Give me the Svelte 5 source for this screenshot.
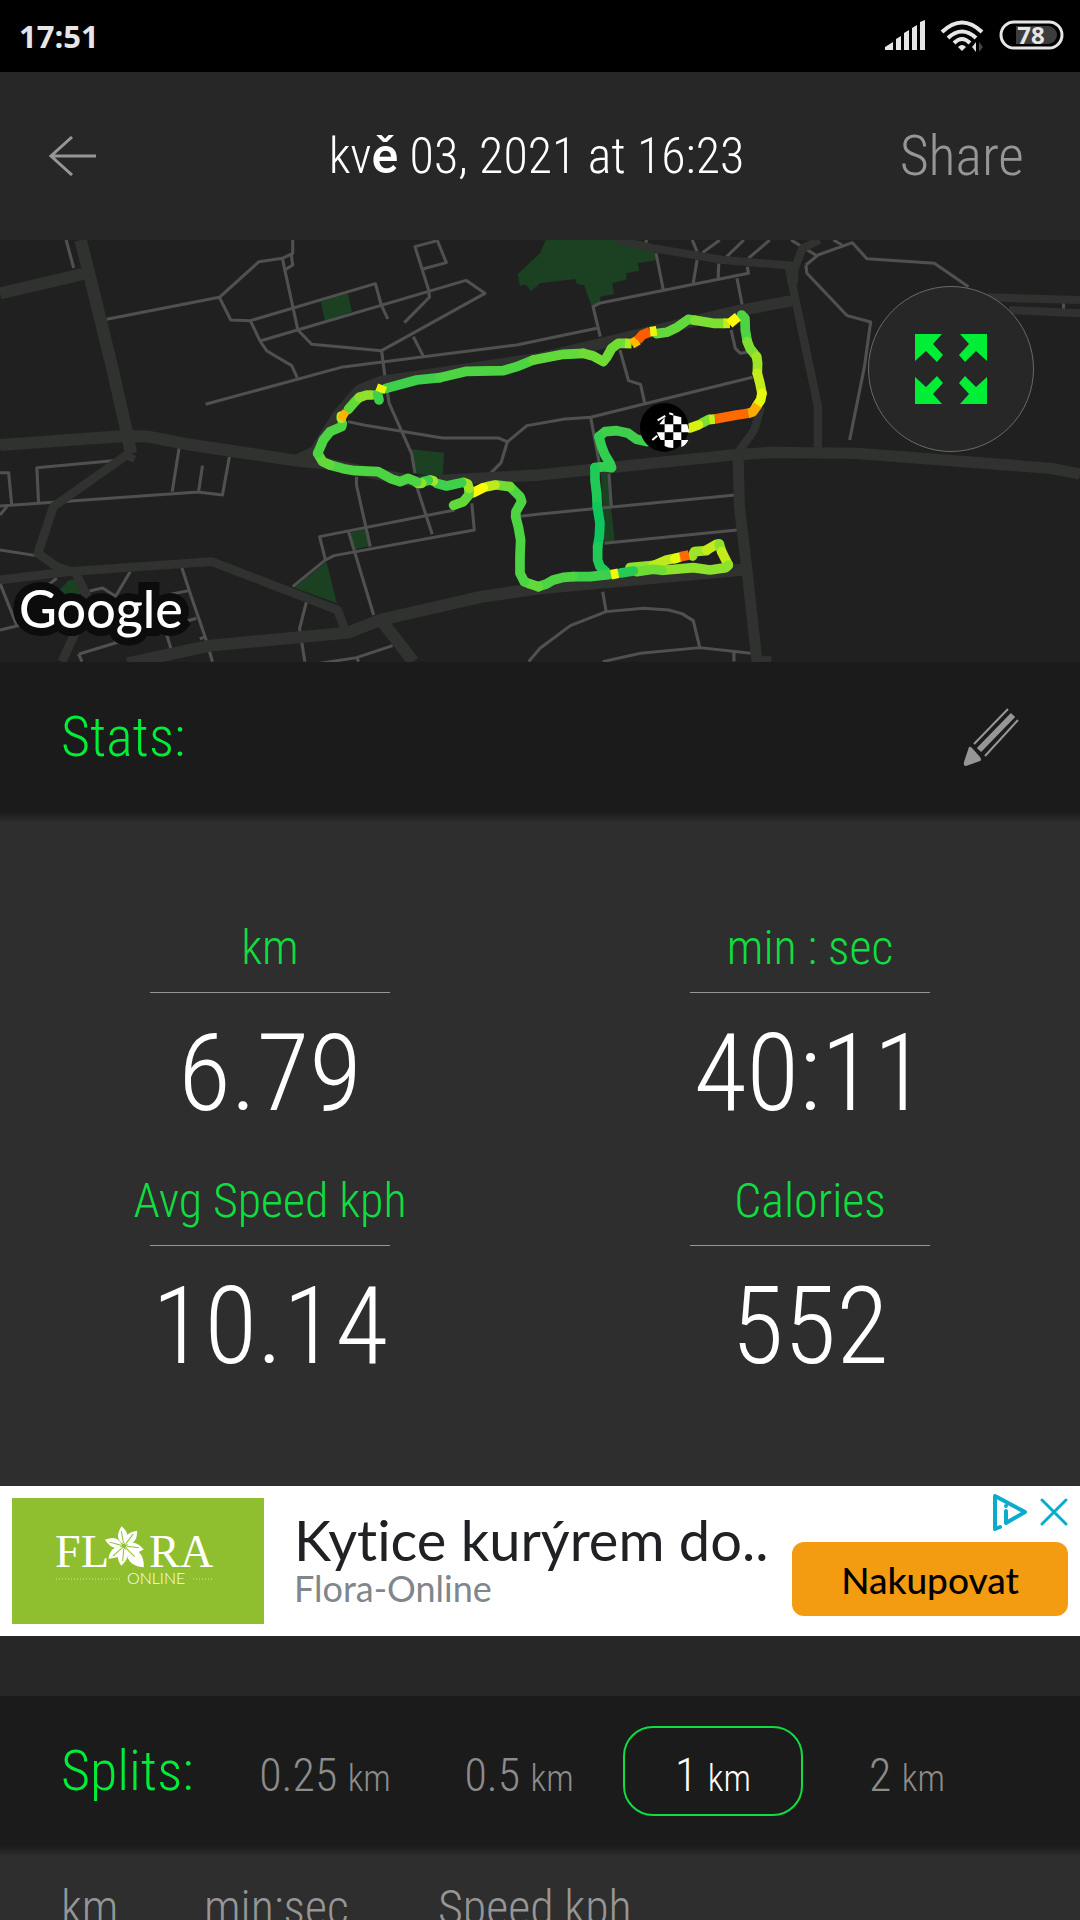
<script lang="ts">
    type Stat = { label: string; value: string };
    type Segment = { color: string; d: string };

    const stats: Stat[] = [
        { label: "km", value: "6.79" },
        { label: "min : sec", value: "40:11" },
        { label: "Avg Speed kph", value: "10.14" },
        { label: "Calories", value: "552" },
    ];

    const splits = ["0.25", "0.5", "1", "2"];
    let selected = $state("1");

    // speed coloured pieces of the run, slow is green and fast is red
    const route: Segment[] = [
        { color: "#3ed04a", d: "M1040 425L1010 418L985 400L950 392L915 395L897 410" },
        { color: "#32ce50", d: "M897 410L905 440L915 465L930 490L935 503L915 500L885 503" },
        { color: "#20ca56", d: "M885 503L885 540L890 580L892 620" },
        { color: "#0fc55e", d: "M892 620L900 670L898 710L893 740" },
        { color: "#20ca56", d: "M893 740L893 780L900 800L918 816" },
        { color: "#8ee22c", d: "M990 803L1070 795" },
        { color: "#bdea1c", d: "M1060 797L1100 780L1130 774" },
        { color: "#e6f80e", d: "M1125 776L1140 771" },
        { color: "#9fe526", d: "M1178 768L1183 755L1220 752" },
        { color: "#c4ec1a", d: "M1220 750L1250 733L1258 732" },
        { color: "#8ee22c", d: "M1258 732L1265 755" },
        { color: "#c4ec1a", d: "M1265 755L1285 795" },
        { color: "#8ee22c", d: "M1285 795L1278 803L1230 810L1180 803L1090 811" },
        { color: "#6fdc36", d: "M1085 811L1060 808L1010 815" },
        { color: "#25cb55", d: "M1000 813L962 819" },
        { color: "#3ed04a", d: "M925 824L870 830L820 830" },
        { color: "#4cd443", d: "M820 830L790 832L760 840L740 852L715 860" },
        { color: "#62d93a", d: "M715 860L690 852L673 845" },
        { color: "#4cd443", d: "M673 845L660 820L660 770L662 720L655 680L647 650L648 635L665 605L660 590L630 560" },
        { color: "#6fdc36", d: "M630 560L590 555" },
        { color: "#bdea1c", d: "M585 555L560 560" },
        { color: "#fbfb05", d: "M550 563L520 578" },
        { color: "#62d93a", d: "M461 616L490 605L507 585L507 565" },
        { color: "#9fe526", d: "M507 565L503 552L490 547" },
        { color: "#3ed04a", d: "M485 548L440 558L410 550" },
        { color: "#a6e624", d: "M400 543L390 540" },
        { color: "#3ed04a", d: "M385 541L370 545" },
        { color: "#8ee22c", d: "M365 550L353 550" },
        { color: "#4cd443", d: "M350 546L325 535L300 545L275 537L235 515L165 512L130 506L90 495" },
        { color: "#62d93a", d: "M90 495L68 485L53 460" },
        { color: "#4cd443", d: "M53 460L70 420L90 395L125 380L127 370" },
        { color: "#b1e920", d: "M124 355L124 348" },
        { color: "#62d93a", d: "M145 328L165 305L178 292" },
        { color: "#8ee22c", d: "M178 292L200 285L215 285" },
        { color: "#3ed04a", d: "M237 300L233 282" },
        { color: "#3ed04a", d: "M258 265L350 240L420 233" },
        { color: "#4cd443", d: "M420 233L500 214L610 212L650 200L700 180" },
        { color: "#62d93a", d: "M700 180L790 163L850 160" },
        { color: "#6fdc36", d: "M850 160L880 168L910 185L920 172L935 145L955 130L975 130" },
        { color: "#62d93a", d: "M1070 101L1100 97L1130 83L1165 58L1185 61" },
        { color: "#7ddf31", d: "M1185 61L1240 70L1275 70" },
        { color: "#4cd443", d: "M1325 45L1335 55L1336 90L1342 125" },
        { color: "#7ddf31", d: "M1342 125L1350 145L1370 170" },
        { color: "#9fe526", d: "M1370 170L1373 190L1372 220" },
        { color: "#c4ec1a", d: "M1372 220L1380 250L1386 280" },
        { color: "#e6f80e", d: "M1386 280L1382 300L1370 318" },
        { color: "#7ddf31", d: "M1228 358L1205 370" },
        { color: "#d9f212", d: "M1195 375L1170 384" },
    ];

    const hotSpots: Segment[] = [
        { color: "#ff6a00", d: "M1140 770L1167 765" },
        { color: "#f4f808", d: "M933 824L955 820" },
        { color: "#ffb000", d: "M120 340L140 353" },
        { color: "#e9f50c", d: "M240 277L248 256" },
        { color: "#b1e920", d: "M975 130L995 131" },
        { color: "#ffba00", d: "M995 132L1015 120" },
        { color: "#ff5c00", d: "M1013 121L1028 104L1050 95" },
        { color: "#f0f50a", d: "M1050 95L1070 92" },
        { color: "#c4ec1a", d: "M1270 70L1290 70" },
        { color: "#fbfb05", d: "M1288 71L1314 50" },
        { color: "#ffac00", d: "M1373 315L1358 336L1343 341" },
        { color: "#ff6a00", d: "M1345 340L1310 345L1245 357" },
        { color: "#c8ee18", d: "M1245 357L1228 359" },
    ];

    const minorRoads = [
        "M192 0L214 84M310 238L637 172L752 65L820 55L850 40L850 0M637 172L670 240L727 242L1090 131L1107 195L1126 237M820 55L827 90L865 270L905 313L1108 332L1408 160L1353 121L755 303M727 242L755 303L775 333L847 377L863 413",
        "M827 90L850 75L846 45M1247 158L1205 20L1270 2L1296 68L1228 87M1245 155L1247 172L1174 248M1200 290L1228 346M1108 332L1118 412M597 493L990 382L1500 315L1733 265M1122 440L1130 490L1195 640L1205 700M1010 545L1060 556L1285 594L1447 594L1473 606L1530 557L1640 537L1715 532L1870 492L2185 412M1473 606L1455 668L1415 710",
        "M0 798L575 756L646 765L666 650M500 755L520 625M577 752L588 677M112 790L107 683L350 660M0 698H25L34 795M0 825L20 800M0 930L105 947M850 1040L945 960L970 947L1377 870L1370 790M945 960L928 890L1320 810M1012 875L1085 1125M1035 710L1035 735L1075 920M1210 740L1255 883",
        "M0 1030L50 1160M0 1170L60 1155M70 1090L165 1015M378 995L335 1070M528 983L552 1060L597 1195L617 1265M260 1053L298 1044L345 1075M470 1068L548 1052M580 1197L597 1190M230 1242L570 1135M228 1242L238 1265M330 1130L335 1208M480 1170L496 1225M890 1085L870 1165L885 1265M930 1270L1035 1253L1140 1217M1035 1253L1042 1265M1535 1265L1568 1225L1656 1157L1760 1115L1868 1105L1942 1110L1980 1121L2013 1142L2032 1223M1750 1265L1860 1240L2032 1223L2180 1240M2131 1235V1265M1750 1055L1760 1115",
        "M1500 830L1568 822L2135 765M1755 910L2140 870M1768 700L1775 800M1715 532L1742 680M1800 330L1825 422L1860 433L1872 490M1743 290L1722 200L1740 190L2173 100L2170 80M1905 40L1926 150M2024 60L2012 135M2087 70L2085 120M2140 115L2155 195M2010 0L2024 35M2090 0L2040 38M2160 0L2110 50M2235 0L2173 55M1870 20L1878 0M2297 0L2373 48M2420 0L2445 15M2340 75L2375 45L2475 8L2517 56L2713 70L2812 140M2340 75L2343 100L2460 227L2528 246L2510 380L2467 600M2123 270L2135 325L2150 340L2180 335M3088 190V208",
    ];
</script>

<div class="screen">
    <div class="status-bar">
        <span class="clock">17:51</span>
        <svg class="status-icons" viewBox="0 0 180 32" aria-hidden="true">
            <g fill="#e6e6e6">
                <path d="M0 30v-3l8-5v8zM11 30V19l5-3v14zM19 30V13l5-3v20zM27 30V8l5-3v25zM35 30V2l5-2v30z" />
            </g>
            <g fill="none" stroke="#e6e6e6" stroke-width="4">
                <path d="M57 12Q77-7 97 12M63 18Q77 5 91 18M69 23Q77 15 85 23" />
                <rect x="116" y="2" width="61" height="26" rx="13" stroke-width="3" />
            </g>
            <path d="M73 27Q77 23 81 27L77 31Z" fill="#e6e6e6" />
            <path d="M91 22v10l-4-5" fill="#ddd" />
            <path d="M94 32V22l4 5" fill="#444" />
            <path d="M131 6h32a9 9 0 0 1 0 18h-32z" fill="#3d3d3d" />
            <text x="146" y="24" text-anchor="middle" class="battery">78</text>
        </svg>
    </div>

    <header>
        <button class="back" aria-label="Back">
            <svg width="48" height="40" viewBox="0 0 48 40" fill="none" stroke="#969696" stroke-width="3">
                <path d="M47 20H2M23 1L2 20L23 39" />
            </svg>
        </button>
        <h1>kv<b>ě</b> 03, 2021 at 16:23</h1>
        <button class="share">Share</button>
    </header>

    <div class="map">
        <svg viewBox="0 0 1080 422" preserveAspectRatio="xMidYMid slice" role="img" aria-label="Map of the run">
            <g transform="scale(.3444 .3333)" fill="none" stroke-linejoin="round">
                <g fill="#1b4122">
                    <path d="M932 185L1010 160L1022 215L943 242ZM1192 628L1290 638L1284 715L1205 700ZM1014 878L1062 868L1075 918L1030 928ZM855 1043L948 965L978 1090ZM165 1060L200 1020L220 1018L235 1060L200 1080L110 1120L95 1100Z" />
                    <path d="M1568 40L1503 103L1510 137L1527 134L1542 153L1568 130L1670 117L1675 132L1696 136L1720 205L1743 185V170L1783 162L1778 130L1820 118L1818 100L1856 92L1852 70L1905 60L1900 35L1800 0H1585Z" />
                    <path d="M1745 700L1762 690L1785 905H1755Z" />
                </g>
                <g stroke="#505050" stroke-width="9">
                    {#each minorRoads as d (d)}
                        <path {d} />
                    {/each}
                </g>
                <g stroke="#30322f">
                    <path stroke-width="36" d="M234 0L258 98L325 380L370 585L380 640M0 160L258 98M0 615L370 587L430 590L540 612L860 662L940 670M380 640L370 660" />
                    <path stroke-width="34" d="M860 662L915 635L985 520L1045 450L1105 425L1568 355L2130 215L2310 180M940 670L1205 725L1568 705L2130 645L2240 637L2490 640L3050 685L3136 702" />
                    <path stroke-width="26" d="M375 640L155 800L110 940L165 980L220 1000L260 1085L180 1265M0 1020L200 995L615 965L980 1110L1000 1165" />
                    <path stroke-width="36" d="M370 1270L610 1217L1010 1178L1110 1138L1400 1070L1568 1045L2170 988M1110 1145L1200 1265" />
                    <path stroke-width="24" d="M1790 0L1900 25L2100 60L2310 78L2330 25L2380 0M2290 80L2310 180L2375 500V640M2210 500L2190 570L2145 635M2868 172L3136 180M2930 210L3136 220" />
                    <path stroke-width="32" d="M2143 640L2147 800L2170 1000L2198 1265L2240 1265M2303 85L2301 130" />
                </g>
            </g>
            <g transform="translate(300 60) scale(.3333)" fill="none" stroke-width="29" stroke-linejoin="round">
                {#each route as part (part.d)}
                    <path d={part.d} stroke={part.color} stroke-linecap="round" />
                {/each}
                {#each hotSpots as part (part.d)}
                    <path d={part.d} stroke={part.color} />
                {/each}
                <!-- finish flag -->
                <g stroke="none">
                    <circle cx="1093" cy="382" r="73" fill="#000" />
                    <path
                        fill="#fff"
                        d="M1078 373L1094 352V373ZM1120 346L1144 352V373H1120ZM1094 373H1120V397H1094ZM1144 373H1162L1168 397H1144ZM1070 397H1094V420H1082ZM1120 397H1144V420H1120ZM1094 420H1120V444Q1104 444 1094 438ZM1144 420H1165Q1158 436 1144 441Z"
                    />
                    <path stroke="#fff" stroke-width="6" d="M1057 420L1072 407M1073 361L1096 348M1108 340L1120 344" />
                </g>
            </g>
            <text class="google" x="19" y="388">Google</text>
        </svg>
        <button class="expand" aria-label="Full screen map">
            <svg width="72" height="70" viewBox="0 0 72 70" fill="#00ee36">
                <path id="corner" d="M0 0H27L18 10L28 21L22 28L11 17L0 27Z" />
                <use href="#corner" transform="translate(72 0) scale(-1 1)" />
                <use href="#corner" transform="translate(0 70) scale(1 -1)" />
                <use href="#corner" transform="translate(72 70) scale(-1 -1)" />
            </svg>
        </button>
    </div>

    <section>
        <div class="bar">
            <h2>Stats:</h2>
            <button class="edit" aria-label="Edit">
                <svg width="56" height="58" viewBox="0 0 56 58">
                    <g fill="none" stroke="#969696">
                        <path stroke-width="2" d="M11 36L45 1M22 48L55 12" />
                        <path stroke-width="6" d="M16 42L50 7" />
                    </g>
                    <path d="M6 39Q7 38 9 40L17 49Q19 52 17 53L3 58Q0 58 1 54Z" fill="#969696" />
                </svg>
            </button>
        </div>
        <dl class="stats">
            {#each stats as stat (stat.label)}
                <div class="stat">
                    <dt>{stat.label}</dt>
                    <dd>{stat.value}</dd>
                </div>
            {/each}
        </dl>
    </section>

    <aside class="ad">
        <svg class="ad-logo" width="252" height="126" viewBox="0 0 252 126" role="img" aria-label="Flora Online">
            <rect width="252" height="126" fill="#8fbf2f" />
            <g fill="#fff">
                <text class="flora" x="43" y="69">F</text>
                <text class="flora" x="69" y="69">L</text>
                <text class="flora" x="137" y="69">R</text>
                <text class="flora" x="168" y="69">A</text>
                <text class="online" x="115" y="86">ONLINE</text>
                <g transform="translate(112 48)">
                    {#each [-10, 38, 97, 135, 185, 228, 285] as angle, i}
                        <path transform="rotate({angle})" d={i === 3 ? "M0-2Q13-16 1-29Q-13-16 0-2Z" : "M0-2Q10-9 1-20Q-9-9 0-2Z"} />
                        <path transform="rotate({angle})" d="M0-3V-15" stroke="#8fbf2f" />
                    {/each}
                </g>
            </g>
            <path d="M44 81H110M181 81H202" stroke="#d3e6ab" stroke-dasharray="1 2" />
        </svg>
        <div class="ad-text">
            <strong>Kytice kurýrem do..</strong>
            <span>Flora-Online</span>
        </div>
        <div class="ad-side">
            <div class="ad-controls">
                <a href="#adchoices" aria-label="AdChoices">
                    <svg width="36" height="38" viewBox="0 0 36 38" fill="none" stroke="#09acca" stroke-width="4" stroke-linejoin="round" stroke-linecap="round">
                        <path d="M8 34L3 36V3L33 19L14 30V18M14 13V13" />
                    </svg>
                </a>
                <button aria-label="Close ad">
                    <svg width="28" height="28" viewBox="0 0 28 28" stroke="#09acca" stroke-width="3" stroke-linecap="round">
                        <path d="M2 2L26 26M26 2L2 26" />
                    </svg>
                </button>
            </div>
            <button class="buy">Nakupovat</button>
        </div>
    </aside>

    <section class="splits">
        <div class="bar">
            <h2>Splits:</h2>
            <div class="options">
                {#each splits as split (split)}
                    <button
                        class="option"
                        class:active={split === selected}
                        aria-pressed={split === selected}
                        onclick={() => (selected = split)}
                    >
                        {split} <small>km</small>
                    </button>
                {/each}
            </div>
        </div>
        <table>
            <thead>
                <tr>
                    <th class="col-km">km</th>
                    <th class="col-time">min:sec</th>
                    <th>Speed kph</th>
                </tr>
            </thead>
        </table>
    </section>
</div>

<style>
    :global(body) {
        margin: 0;
        background: #272727;
    }

    .screen {
        height: 100vh;
        overflow: hidden;
        background: #272727;
        color: #fff;
        font-family: "Roboto Condensed", "Liberation Sans Narrow", sans-serif;
        font-weight: 300;
    }

    button {
        padding: 0;
        border: 0;
        background: none;
        color: inherit;
        font: inherit;
    }

    svg {
        display: block;
    }

    h1,
    h2,
    dl,
    dd {
        margin: 0;
        font-weight: 300;
    }

    .status-bar {
        display: flex;
        align-items: center;
        justify-content: space-between;
        box-sizing: border-box;
        height: 72px;
        padding: 0 15px 0 19px;
        background: #000;
    }

    .clock {
        color: #e6e6e6;
        font: 700 31px/40px "Open Sans", sans-serif;
    }

    .status-icons {
        width: 180px;
        height: 32px;
    }

    .battery {
        fill: #e6e6e6;
        font: 700 24px "Open Sans", sans-serif;
    }

    header {
        display: grid;
        grid-template-columns: 1fr auto 1fr;
        align-items: center;
        height: 168px;
        padding: 0 56px 0 49px;
    }

    h1 {
        font-size: 50px;
        line-height: 64px;
    }

    h1 b {
        font-family: Roboto, sans-serif;
        font-weight: 500;
    }

    .share {
        justify-self: end;
        color: #969696;
        font-size: 56px;
        line-height: 64px;
    }

    .map {
        position: relative;
        background: #202020;
    }

    .map > svg {
        width: 100%;
        height: 422px;
    }

    .google {
        fill: #fff;
        stroke: #0c0c0c;
        stroke-width: 16px;
        paint-order: stroke;
        font: 500 52px Lato, sans-serif;
    }

    .expand {
        position: absolute;
        top: 46px;
        right: 46px;
        display: grid;
        place-items: center;
        box-sizing: border-box;
        width: 166px;
        height: 166px;
        border: 1px solid #6a6a6a;
        border-radius: 50%;
        background: #272727;
    }

    .bar {
        display: flex;
        align-items: center;
        box-sizing: border-box;
        height: 160px;
        padding: 0 61px 10px;
        background: linear-gradient(#1b1b1b 150px, #2e2e2e);
    }

    h2 {
        color: #00ee36;
        font-size: 56px;
        line-height: 64px;
    }

    .edit {
        margin-left: auto;
    }

    .stats {
        display: grid;
        grid-template-columns: 1fr 1fr;
        box-sizing: border-box;
        height: 664px;
        padding-top: 98px;
        align-content: start;
        background: #2e2e2e;
    }

    .stat {
        display: flex;
        flex-direction: column;
        align-items: center;
        height: 253px;
    }

    dt {
        color: #10dd40;
        font-size: 48px;
        line-height: 56px;
        text-align: center;
    }

    dt::after {
        content: "";
        display: block;
        width: 240px;
        height: 1px;
        margin: 16px auto 0;
        background: #969696;
    }

    dd {
        margin-top: 24px;
        font-size: 108px;
        line-height: 112px;
    }

    .ad {
        display: flex;
        box-sizing: border-box;
        height: 150px;
        padding: 12px;
        background: #fff;
        font-family: Lato, sans-serif;
        font-variant-ligatures: none;
    }

    .ad-logo {
        flex: none;
    }

    .flora {
        font: 46px "Liberation Serif", serif;
    }

    .online {
        font: 300 16px Lato, sans-serif;
    }

    .ad-text {
        display: flex;
        flex-direction: column;
        flex: 1;
        padding: 12px 0 0 30px;
        white-space: nowrap;
    }

    .ad-text strong {
        color: #202124;
        font-size: 56px;
        font-weight: 400;
        line-height: 60px;
    }

    .ad-text span {
        color: #80868b;
        font-size: 36px;
        font-weight: 400;
        line-height: 36px;
    }

    .ad-side {
        display: flex;
        flex-direction: column;
        justify-content: space-between;
        width: 276px;
        padding-bottom: 8px;
    }

    .ad-controls {
        display: flex;
        align-items: center;
        justify-content: flex-end;
        gap: 12px;
        height: 28px;
    }

    .buy {
        height: 74px;
        border-radius: 12px;
        background: #f39c12;
        color: #000;
        font-size: 37px;
        font-weight: 500;
    }

    .splits {
        margin-top: 60px;
    }

    .options {
        display: flex;
        gap: 14px;
        margin: 0 22px 0 auto;
    }

    .option {
        width: 180px;
        height: 90px;
        padding-top: 8px;
        border: 2px solid transparent;
        border-radius: 30px;
        color: #8c8c8c;
        font-size: 46px;
        white-space: nowrap;
    }

    .option small {
        font-size: 36px;
    }

    .option.active {
        border-color: #10dd40;
        color: #fff;
    }

    table {
        width: 100%;
        padding: 24px 61px 0;
        border-spacing: 0;
        background: #2e2e2e;
    }

    th {
        padding: 0;
        color: #969696;
        font-size: 48px;
        font-weight: 300;
        line-height: 56px;
        text-align: left;
    }

    .col-km {
        width: 143px;
    }

    .col-time {
        width: 234px;
    }
</style>
